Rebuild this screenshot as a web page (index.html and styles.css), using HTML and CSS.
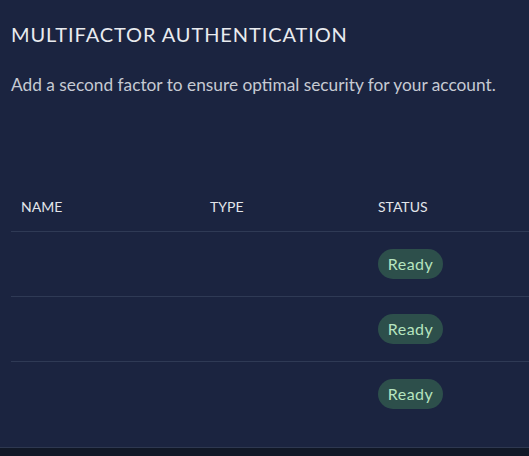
FILE: index.html
```html
<!DOCTYPE html>
<html>
<head>
<meta charset="utf-8">
<link rel="stylesheet" href="styles.css">
</head>
<body>
<section class="card">
  <h1 class="title">MULTIFACTOR AUTHENTICATION</h1>
  <p class="desc">Add a second factor to ensure optimal security for your account.</p>
  <div class="table">
    <div class="row head">
      <div class="cell">NAME</div>
      <div class="cell">TYPE</div>
      <div class="cell">STATUS</div>
    </div>
    <div class="row">
      <div class="cell"></div>
      <div class="cell"></div>
      <div class="cell"><span class="badge">Ready</span></div>
    </div>
    <div class="row">
      <div class="cell"></div>
      <div class="cell"></div>
      <div class="cell"><span class="badge">Ready</span></div>
    </div>
    <div class="row last">
      <div class="cell"></div>
      <div class="cell"></div>
      <div class="cell"><span class="badge">Ready</span></div>
    </div>
  </div>
</section>
</body>
</html>
```
FILE: styles.css
```css
html, body {
  margin: 0;
  padding: 0;
  background: #111827;
  font-family: Lato, "Noto Sans", sans-serif;
  overflow: hidden;
}
.card {
  background: #1b2440;
  padding: 22px 0 21px 11px;
  border-bottom: 1px solid #2e3850;
}
.title {
  margin: 0;
  font-size: 20px;
  line-height: 24px;
  font-weight: 400;
  letter-spacing: 0.9px;
  color: #e9ebef;
}
.desc {
  margin: 27px 0 0;
  font-size: 17.3px;
  line-height: 24px;
  color: #c6cad3;
}
.table {
  margin-top: 86px;
}
.row {
  display: grid;
  grid-template-columns: 189px 168px 1fr;
  align-items: center;
  height: 64px;
  border-bottom: 1px solid #2f3a55;
}
.row.head {
  height: 48px;
  align-items: end;
}
.row.head .cell {
  padding-bottom: 14px;
}
.row.last {
  border-bottom: none;
}
.cell {
  padding-left: 10px;
  font-size: 14px;
  line-height: 20px;
  color: #e2e5ea;
}
.badge {
  display: inline-flex;
  align-items: center;
  justify-content: center;
  width: 65px;
  height: 30px;
  border-radius: 15px;
  background: #2d4f4b;
  color: #b6e4bf;
  font-size: 16px;
  letter-spacing: 0.5px;
}
```
